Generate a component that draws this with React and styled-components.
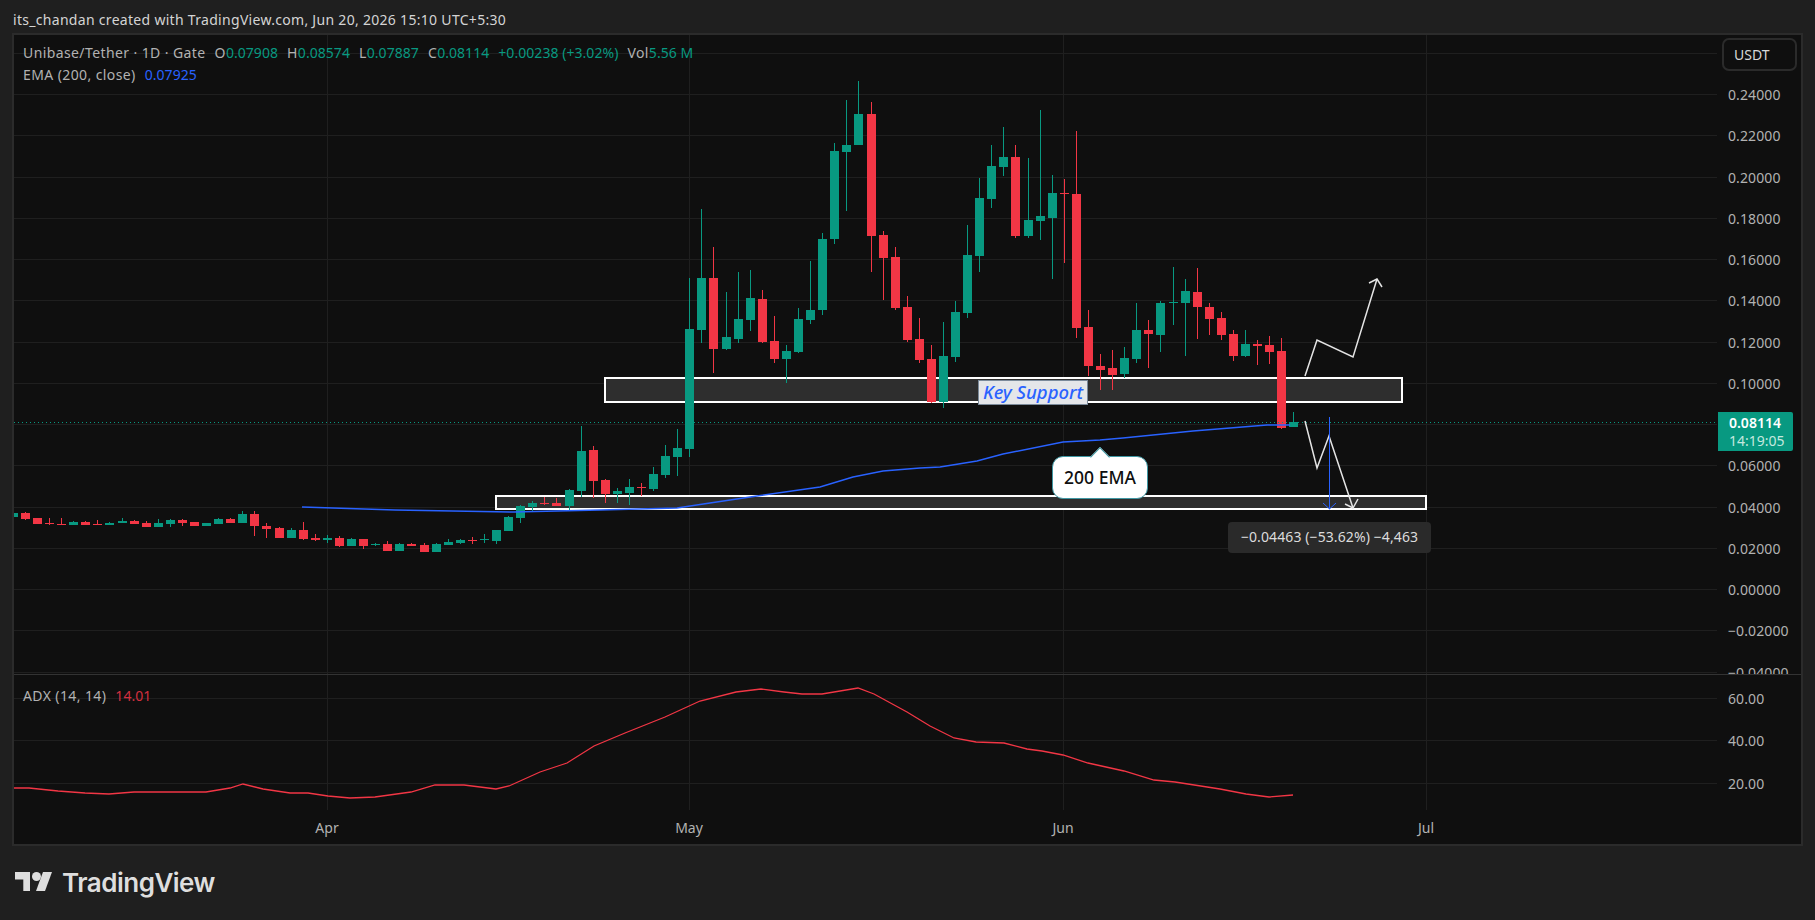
import React from 'react';
import styled, { createGlobalStyle } from 'styled-components';

const UP = '#089981';
const DOWN = '#f23645';
const BLUE = '#2962ff';
const GRID = '#1f1f1f';
const TEXT = '#b2b2b2';
const FONT = '"Noto Sans", "Open Sans", sans-serif';

const GlobalStyle = createGlobalStyle`
  html, body {
    margin: 0;
    padding: 0;
    background: #1f1f1f;
  }
`;

const Page = styled.div`
  width: 1815px;
  height: 920px;
  overflow: hidden;
  display: flex;
  flex-direction: column;
  font-family: ${FONT};
  font-size: 14px;
  color: ${TEXT};
`;

const Header = styled.div`
  height: 33px;
  padding-left: 13px;
  box-sizing: border-box;
  line-height: 40px;
  color: #d4d4d4;
  font-size: 14px;
  letter-spacing: 0.3px;
`;

const Frame = styled.div`
  width: 1791px;
  height: 813px;
  margin-left: 12px;
  box-sizing: border-box;
  border: 2px solid #2b2b2b;
  background: #0f0f0f;
  display: flex;
  flex-direction: column;
`;

const PaneRow = styled.div`
  height: ${p => p.$height}px;
  display: flex;
  flex: none;
  overflow: hidden;
`;

const Plot = styled.div`
  width: 1703px;
  position: relative;
  flex: none;
`;

const PriceAxis = styled.div`
  flex: 1;
  position: relative;
`;

const Separator = styled.div`
  height: 1px;
  flex: none;
  background: #333;
`;

const ChartSvg = styled.svg`
  display: block;
`;

const AxisLabel = styled.span`
  position: absolute;
  left: 11px;
  transform: translateY(calc(-50% + 0.5px));
  white-space: nowrap;
  line-height: 18px;
  letter-spacing: 0.1px;
`;

const CurrencyButton = styled.div`
  position: absolute;
  left: 5px;
  top: 3px;
  width: 75px;
  height: 33px;
  box-sizing: border-box;
  border: 2px solid #2b2b2b;
  border-radius: 7px;
  padding-left: 10px;
  line-height: 29px;
  color: #d8d8d8;
`;

const PriceTag = styled.div`
  position: absolute;
  left: 1px;
  top: 377px;
  width: 75px;
  height: 39px;
  box-sizing: border-box;
  padding: 2px 0 0 11px;
  background: ${UP};
  border-radius: 0 2px 2px 0;
  color: #fff;
  line-height: 18px;
  font-weight: 600;
`;

const Countdown = styled.div`
  font-weight: 400;
  color: #c4e8df;
`;

const Legend = styled.div`
  position: absolute;
  left: 9px;
  top: 8px;
  display: flex;
  flex-direction: column;
  gap: 3px;
  line-height: 19px;
  letter-spacing: 0.4px;
`;

const LegendRow = styled.div`
  display: flex;
  white-space: nowrap;
  gap: 9px;
`;

const Value = styled.span`
  color: ${p => p.$color || UP};
  letter-spacing: 0.05px;
`;

const KeySupport = styled.div`
  position: absolute;
  left: 964px;
  top: 345px;
  width: 110px;
  height: 25px;
  box-sizing: border-box;
  border: 1px solid #7b8a9a;
  background: #e4e6e9;
  color: ${BLUE};
  font-style: italic;
  font-size: 18.5px;
  font-weight: 500;
  line-height: 22px;
  text-align: center;
  white-space: nowrap;
`;

const Callout = styled.div`
  position: absolute;
  left: 1038px;
  top: 421px;
  width: 96px;
  height: 43px;
  box-sizing: border-box;
  border: 1px solid #3f97a3;
  border-radius: 11px;
  background: #fff;
  color: #0f0f0f;
  font-size: 17.5px;
  font-weight: 500;
  line-height: 40px;
  text-align: center;

  &::before {
    content: '';
    position: absolute;
    left: 40px;
    top: -7px;
    width: 13px;
    height: 13px;
    background: #fff;
    border: 1px solid #3f97a3;
    border-right: 0;
    border-bottom: 0;
    transform: rotate(45deg);
  }
`;

const MeasureLabel = styled.div`
  position: absolute;
  left: 1214px;
  top: 487px;
  width: 203px;
  height: 31px;
  border-radius: 4px;
  background: #2a2a2a;
  color: #dcdcdc;
  line-height: 30px;
  text-align: center;
  white-space: nowrap;
  letter-spacing: 0.1px;
`;

const IndicatorLegend = styled(LegendRow)`
  position: absolute;
  left: 9px;
  top: 11px;
  line-height: 19px;
  letter-spacing: 0.4px;
`;

const TimeAxis = styled.div`
  height: 34px;
  flex: 1;
  position: relative;
`;

const TimeLabel = styled.span`
  position: absolute;
  top: 8px;
  transform: translateX(-50%);
  line-height: 19px;
`;

const Footer = styled.div`
  flex: 1;
  display: flex;
  align-items: flex-start;
  gap: 10px;
  padding: 26px 0 0 15px;
  color: #dedede;
`;

const Wordmark = styled.span`
  font-family: Inter, "Noto Sans", sans-serif;
  font-size: 26px;
  font-weight: 600;
  line-height: 22px;
  letter-spacing: -0.5px;
`;

// [wickTop, bodyTop, bodyBottom, wickBottom, up], page pixels, day -56 up to day 50
const CANDLES = [
  [503, 513, 517, 517, 1], [512, 513, 519, 520, 0], [518, 518, 524, 524, 0], [518, 523, 524, 525, 0],
  [518, 524, 525, 525, 0], [521, 522, 525, 525, 1], [521, 522, 525, 525, 0], [520, 524, 525, 525, 0],
  [522, 523, 525, 525, 1], [518, 521, 523, 523, 1], [520, 521, 524, 524, 0], [521, 523, 527, 527, 0],
  [519, 523, 527, 527, 1], [519, 520, 524, 527, 1], [519, 520, 523, 526, 0], [522, 522, 526, 526, 0],
  [523, 523, 526, 526, 1], [518, 519, 524, 524, 1], [518, 519, 523, 523, 0], [511, 514, 523, 523, 1],
  [511, 514, 526, 536, 0], [523, 526, 529, 538, 0], [527, 528, 538, 538, 0], [528, 530, 538, 538, 1],
  [522, 530, 539, 540, 0], [534, 538, 540, 541, 0], [535, 538, 540, 543, 1], [536, 538, 546, 547, 0],
  [538, 539, 546, 546, 1], [539, 539, 546, 549, 0], [543, 544, 545, 546, 1], [541, 544, 551, 551, 0],
  [543, 544, 551, 551, 1], [543, 544, 546, 546, 0], [543, 545, 552, 552, 0], [543, 544, 552, 552, 1],
  [539, 542, 545, 545, 1], [539, 540, 543, 544, 1], [537, 540, 541, 544, 0], [534, 539, 540, 543, 1],
  [530, 530, 541, 544, 1], [516, 517, 531, 531, 1], [505, 506, 518, 523, 1], [501, 503, 507, 511, 1],
  [497, 503, 504, 505, 0], [498, 503, 506, 506, 0], [489, 490, 506, 510, 1], [426, 451, 491, 497, 1],
  [446, 450, 481, 498, 0], [479, 480, 494, 503, 0], [488, 491, 494, 503, 1], [479, 487, 493, 505, 1],
  [483, 487, 488, 496, 0], [467, 474, 489, 491, 1], [445, 456, 475, 478, 1], [429, 448, 457, 476, 1],
  [278, 329, 449, 457, 1], [209, 278, 330, 343, 1], [247, 278, 349, 373, 0], [292, 337, 349, 350, 1],
  [272, 319, 339, 343, 1], [270, 298, 320, 331, 1], [290, 299, 342, 343, 0], [316, 341, 359, 363, 0],
  [345, 351, 359, 383, 1], [308, 319, 352, 353, 1], [261, 310, 320, 324, 1], [233, 239, 310, 315, 1],
  [143, 151, 239, 244, 1], [100, 145, 152, 211, 1], [81, 114, 145, 145, 1], [102, 114, 236, 272, 0],
  [231, 235, 258, 300, 0], [247, 257, 308, 310, 0], [296, 307, 340, 342, 0], [318, 339, 360, 363, 0],
  [345, 359, 402, 403, 0], [322, 356, 402, 408, 1], [301, 312, 357, 362, 1], [225, 255, 313, 318, 1],
  [178, 198, 256, 272, 1], [145, 166, 199, 208, 1], [127, 157, 167, 176, 1], [145, 157, 236, 238, 0],
  [158, 220, 236, 238, 1], [110, 216, 221, 240, 1], [175, 193, 218, 279, 1], [179, 193, 194, 263, 0],
  [131, 194, 328, 338, 0], [310, 327, 366, 376, 0], [354, 366, 370, 390, 0], [350, 368, 375, 390, 0],
  [347, 358, 374, 378, 1], [303, 330, 359, 363, 1], [320, 330, 334, 368, 0], [301, 303, 335, 352, 1],
  [267, 302, 303, 325, 1], [279, 291, 303, 356, 1], [268, 292, 307, 339, 0], [303, 307, 319, 335, 0],
  [312, 318, 335, 340, 0], [330, 334, 356, 361, 0], [330, 344, 356, 357, 1], [340, 344, 346, 365, 0],
  [336, 345, 352, 364, 0], [338, 351, 428, 429, 0], [412, 422, 427, 427, 1],
];

const PRICE_LINES = [
  [53], [94, '0.24000'], [135, '0.22000'], [177, '0.20000'], [218, '0.18000'], [259, '0.16000'],
  [300, '0.14000'], [342, '0.12000'], [383, '0.10000'], [424], [465, '0.06000'], [507, '0.04000'],
  [548, '0.02000'], [589, '0.00000'], [630, '−0.02000'], [672, '−0.04000'],
];
const ADX_LINES = [[698, '60.00'], [740, '40.00'], [783, '20.00']];
const MONTHS = [[327, 'Apr'], [689, 'May'], [1063, 'Jun'], [1426, 'Jul']];

const EMA_LINE = '302,507 395,510 514,512 600,510 677,508 710,503 757,496 820,487 853,477 883,471 920,468 940,467 977,461 1003,454 1063,442 1100,440 1123,438 1193,431 1267,425 1290,425';
const ADX_LINE = '13,788 29,788 58,791 85,793 109,794 134,792 170,792 206,792 230,788 243,784 263,789 290,793 308,793 328,796 350,798 375,797 411,792 435,785 464,785 496,789 509,786 540,772 567,763 594,746 625,733 665,717 700,701 736,692 761,689 784,692 802,694 822,694 858,688 874,694 907,712 930,726 954,738 976,742 1004,743 1027,749 1042,751 1063,755 1088,763 1124,771 1154,780 1175,782 1220,789 1246,794 1269,797 1293,795';

function Candle({ day, data }) {
  const [wickTop, bodyTop, bodyBottom, wickBottom, up] = data;
  const x = Math.round(689.3 + 12.08 * day);
  const color = up ? UP : DOWN;
  return (
    <g fill={color} shapeRendering="crispEdges">
      <rect x={x} y={wickTop} width={1} height={wickBottom - wickTop} />
      <rect x={x - 4} y={bodyTop} width={9} height={Math.max(bodyBottom - bodyTop, 1)} />
    </g>
  );
}

function GridLines({ lines, top, bottom }) {
  return (
    <g stroke={GRID} strokeWidth="1" shapeRendering="crispEdges">
      {lines.map(([y]) => <line key={y} x1="14" x2="1717" y1={y + 0.5} y2={y + 0.5} />)}
      {MONTHS.map(([x]) => <line key={x} x1={x + 0.5} x2={x + 0.5} y1={top} y2={bottom} />)}
    </g>
  );
}

function PriceChart() {
  return (
    <ChartSvg width="1703" height="639" viewBox="14 35 1703 639">
      <GridLines lines={PRICE_LINES} top={35} bottom={674} />
      <rect x="605" y="378" width="797" height="24" fill="#2e2e2e" stroke="#fff" strokeWidth="2" />
      <rect x="496" y="496" width="930" height="13" fill="#2e2e2e" stroke="#fff" strokeWidth="2" />
      {CANDLES.map((c, i) => <Candle key={i} day={i - 56} data={c} />)}
      <line x1="14" x2="1715" y1="422.5" y2="422.5" stroke={UP} strokeWidth="1" strokeDasharray="1 3" />
      <polyline points={EMA_LINE} fill="none" stroke={BLUE} strokeWidth="1.5" />
      <g fill="none" stroke="#e4e4e4" strokeWidth="1.5">
        <polyline points="1305,376 1317,340 1353,357 1377,279" />
        <polyline points="1369,283 1377,279 1382,287" />
        <polyline points="1305,421 1317,468 1329,436 1353,508" />
        <polyline points="1345,504 1353,508 1358,499" />
      </g>
      <g fill="none" stroke={BLUE} strokeWidth="1">
        <line x1="1329.5" x2="1329.5" y1="417" y2="509" />
        <polyline points="1323,503 1329.5,509 1336,503" />
      </g>
    </ChartSvg>
  );
}

function AdxChart() {
  return (
    <ChartSvg width="1703" height="135" viewBox="14 675 1703 135">
      <GridLines lines={ADX_LINES} top={675} bottom={810} />
      <polyline points={ADX_LINE} fill="none" stroke={DOWN} strokeWidth="1.3" />
    </ChartSvg>
  );
}

function TradingViewMark() {
  return (
    <svg width="37" height="19" viewBox="0 0 37 19" fill="currentColor">
      <path d="M0 0h15v19H8.3V7.5H0Z" />
      <circle cx="21.5" cy="4.5" r="4.5" />
      <path d="M28 0H37L30 19H21Z" />
    </svg>
  );
}

export default function App() {
  return (
    <Page>
      <GlobalStyle />
      <Header>its_chandan created with TradingView.com, Jun 20, 2026 15:10 UTC+5:30</Header>
      <Frame>
        <PaneRow $height={639}>
          <Plot>
            <PriceChart />
            <Legend>
              <LegendRow>
                <span>Unibase/Tether · 1D · Gate</span>
                <span>O<Value>0.07908</Value></span>
                <span>H<Value>0.08574</Value></span>
                <span>L<Value>0.07887</Value></span>
                <span>C<Value>0.08114</Value></span>
                <Value>+0.00238 (+3.02%)</Value>
                <span>Vol<Value>5.56 M</Value></span>
              </LegendRow>
              <LegendRow>
                <span>EMA (200, close)</span>
                <Value $color={BLUE}>0.07925</Value>
              </LegendRow>
            </Legend>
            <KeySupport>Key Support</KeySupport>
            <Callout>200 EMA</Callout>
            <MeasureLabel>−0.04463 (−53.62%) −4,463</MeasureLabel>
          </Plot>
          <PriceAxis>
            <CurrencyButton>USDT</CurrencyButton>
            {PRICE_LINES.filter(([, label]) => label).map(([y, label]) => (
              <AxisLabel key={y} style={{ top: y - 35 }}>{label}</AxisLabel>
            ))}
            <PriceTag>
              0.08114
              <Countdown>14:19:05</Countdown>
            </PriceTag>
          </PriceAxis>
        </PaneRow>
        <Separator />
        <PaneRow $height={135}>
          <Plot>
            <AdxChart />
            <IndicatorLegend>
              <span>ADX (14, 14)</span>
              <Value $color="#d32f3f">14.01</Value>
            </IndicatorLegend>
          </Plot>
          <PriceAxis>
            {ADX_LINES.map(([y, label]) => (
              <AxisLabel key={y} style={{ top: y - 675 }}>{label}</AxisLabel>
            ))}
          </PriceAxis>
        </PaneRow>
        <TimeAxis>
          {MONTHS.map(([x, label]) => (
            <TimeLabel key={x} style={{ left: x - 14 }}>{label}</TimeLabel>
          ))}
        </TimeAxis>
      </Frame>
      <Footer>
        <TradingViewMark />
        <Wordmark>TradingView</Wordmark>
      </Footer>
    </Page>
  );
}
